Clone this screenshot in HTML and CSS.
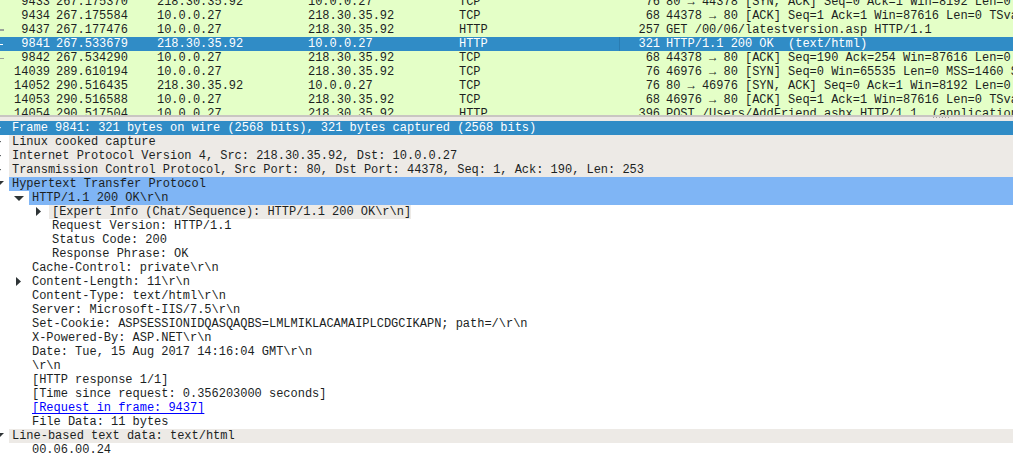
FILE: index.html
```html
<!DOCTYPE html>
<html lang="en">
<head>
<meta charset="utf-8">
<title>Wireshark</title>
<link rel="stylesheet" href="styles.css">
</head>
<body>
<section class="list">
  <div class="pkt"><span class="no">9433</span><span>267.175370</span><span>218.30.35.92</span><span>10.0.0.27</span><span>TCP</span><span class="len">76</span><span class="info">80 → 44378 [SYN, ACK] Seq=0 Ack=1 Win=8192 Len=0 MSS=1460</span></div>
  <div class="pkt"><span class="no">9434</span><span>267.175584</span><span>10.0.0.27</span><span>218.30.35.92</span><span>TCP</span><span class="len">68</span><span class="info">44378 → 80 [ACK] Seq=1 Ack=1 Win=87616 Len=0 TSval=1</span></div>
  <div class="pkt"><i class="mark req"></i><span class="no">9437</span><span>267.177476</span><span>10.0.0.27</span><span>218.30.35.92</span><span>HTTP</span><span class="len">257</span><span class="info">GET /00/06/latestversion.asp HTTP/1.1</span></div>
  <div class="pkt sel"><i class="mark cur"></i><i class="edge"></i><span class="no">9841</span><span>267.533679</span><span>218.30.35.92</span><span>10.0.0.27</span><span>HTTP</span><span class="len">321</span><span class="info">HTTP/1.1 200 OK  (text/html)</span></div>
  <div class="pkt"><i class="mark ack"></i><span class="no">9842</span><span>267.534290</span><span>10.0.0.27</span><span>218.30.35.92</span><span>TCP</span><span class="len">68</span><span class="info">44378 → 80 [ACK] Seq=190 Ack=254 Win=87616 Len=0 TSval=1</span></div>
  <div class="pkt"><span class="no">14039</span><span>289.610194</span><span>10.0.0.27</span><span>218.30.35.92</span><span>TCP</span><span class="len">76</span><span class="info">46976 → 80 [SYN] Seq=0 Win=65535 Len=0 MSS=1460 SACK_PERM=1</span></div>
  <div class="pkt"><span class="no">14052</span><span>290.516435</span><span>218.30.35.92</span><span>10.0.0.27</span><span>TCP</span><span class="len">76</span><span class="info">80 → 46976 [SYN, ACK] Seq=0 Ack=1 Win=8192 Len=0 MSS=1460</span></div>
  <div class="pkt"><span class="no">14053</span><span>290.516588</span><span>10.0.0.27</span><span>218.30.35.92</span><span>TCP</span><span class="len">68</span><span class="info">46976 → 80 [ACK] Seq=1 Ack=1 Win=87616 Len=0 TSval=1</span></div>
  <div class="pkt"><span class="no">14054</span><span>290.517504</span><span>10.0.0.27</span><span>218.30.35.92</span><span>HTTP</span><span class="len">396</span><span class="info">POST /Users/AddFriend.ashx HTTP/1.1  (application/x-www-form</span></div>
</section>
<div class="split"><div class="grip"></div></div>
<section class="tree">
  <div class="row l0 sel"><svg class="arrow right" viewBox="0 0 5 9"><path d="M0 0L5 4.5L0 9Z"/></svg><span class="txt">Frame 9841: 321 bytes on wire (2568 bits), 321 bytes captured (2568 bits)</span></div>
  <div class="row l0 grey"><svg class="arrow right" viewBox="0 0 5 9"><path d="M0 0L5 4.5L0 9Z"/></svg><span class="txt">Linux cooked capture</span></div>
  <div class="row l0 grey"><svg class="arrow right" viewBox="0 0 5 9"><path d="M0 0L5 4.5L0 9Z"/></svg><span class="txt">Internet Protocol Version 4, Src: 218.30.35.92, Dst: 10.0.0.27</span></div>
  <div class="row l0 grey"><svg class="arrow right" viewBox="0 0 5 9"><path d="M0 0L5 4.5L0 9Z"/></svg><span class="txt">Transmission Control Protocol, Src Port: 80, Dst Port: 44378, Seq: 1, Ack: 190, Len: 253</span></div>
  <div class="row l0 blue"><svg class="arrow down" viewBox="0 0 10 5"><path d="M0 0H10L5 5Z"/></svg><span class="txt">Hypertext Transfer Protocol</span></div>
  <div class="row l1 blue"><svg class="arrow down" viewBox="0 0 10 5"><path d="M0 0H10L5 5Z"/></svg><span class="txt">HTTP/1.1 200 OK\r\n</span></div>
  <div class="row l2"><svg class="arrow right" viewBox="0 0 5 9"><path d="M0 0L5 4.5L0 9Z"/></svg><span class="txt greytxt">[Expert Info (Chat/Sequence): HTTP/1.1 200 OK\r\n]</span></div>
  <div class="row l2"><span class="txt">Request Version: HTTP/1.1</span></div>
  <div class="row l2"><span class="txt">Status Code: 200</span></div>
  <div class="row l2"><span class="txt">Response Phrase: OK</span></div>
  <div class="row l1"><span class="txt">Cache-Control: private\r\n</span></div>
  <div class="row l1"><svg class="arrow right" viewBox="0 0 5 9"><path d="M0 0L5 4.5L0 9Z"/></svg><span class="txt">Content-Length: 11\r\n</span></div>
  <div class="row l1"><span class="txt">Content-Type: text/html\r\n</span></div>
  <div class="row l1"><span class="txt">Server: Microsoft-IIS/7.5\r\n</span></div>
  <div class="row l1"><span class="txt">Set-Cookie: ASPSESSIONIDQASQAQBS=LMLMIKLACAMAIPLCDGCIKAPN; path=/\r\n</span></div>
  <div class="row l1"><span class="txt">X-Powered-By: ASP.NET\r\n</span></div>
  <div class="row l1"><span class="txt">Date: Tue, 15 Aug 2017 14:16:04 GMT\r\n</span></div>
  <div class="row l1"><span class="txt">\r\n</span></div>
  <div class="row l1"><span class="txt">[HTTP response 1/1]</span></div>
  <div class="row l1"><span class="txt">[Time since request: 0.356203000 seconds]</span></div>
  <div class="row l1"><a class="txt link" href="#">[Request in frame: 9437]</a></div>
  <div class="row l1"><span class="txt">File Data: 11 bytes</span></div>
  <div class="row l0 grey"><svg class="arrow down" viewBox="0 0 10 5"><path d="M0 0H10L5 5Z"/></svg><span class="txt">Line-based text data: text/html</span></div>
  <div class="row l1"><span class="txt">00.06.00.24</span></div>
</section>
</body>
</html>
```
FILE: styles.css
```css
* { box-sizing: border-box; }
html, body { margin: 0; height: 100%; overflow: hidden; background: #fff; }
body { font: 12px/14px "Liberation Mono", monospace; letter-spacing: -0.02px; color: #1c1f1f; }
.list { height: 115px; overflow: hidden; background: #e4ffc7; }
.pkt { display: grid; grid-template-columns: 50px 101px 151px 151px 145px 62px 1fr; height: 14px; white-space: pre; position: relative; }
.pkt:first-child { margin-top: -5px; }
.pkt > span { padding-left: 6px; overflow: hidden; }
.pkt .no, .pkt .len { text-align: right; padding-left: 0; }
.pkt.sel { background: #308cc6; color: #fff; }
.mark { position: absolute; left: 0; top: 7px; height: 1px; width: 4px; background: #9aa39a; }
.mark.cur { background: #fff; width: 3px; }
.mark.req { top: 6px; height: 2px; }
.edge { position: absolute; left: 619px; top: 0; width: 1px; height: 14px; background: #2a7cb2; }
.split { height: 6px; background: #edeae6; border-top: 2px solid #c9c6c2; }
.grip { margin-left: 933px; width: 16px; height: 1px; background: repeating-linear-gradient(90deg, #a8a5a1 0 1px, transparent 1px 3px); }
.tree { background: #fff; }
.row { height: 14px; white-space: pre; position: relative; }
.row.l0 { padding-left: 9px; }
.row.l1 { padding-left: 29px; }
.row.l2 { padding-left: 49px; }
.txt { padding-left: 3px; display: inline-block; height: 14px; }
.row.sel .txt, .row.grey .txt, .row.blue .txt { display: block; }
.row.sel { background: #308cc6; color: #fff; }
.row.grey .txt { background: #edeae6; }
.row.blue .txt { background: #7fb5f5; }
.greytxt { background: #edeae6; }
.link { color: #0000ff; text-decoration: underline; text-underline-offset: 2px; }
.arrow { position: absolute; fill: #2e3436; }
.arrow.right { top: 2px; width: 5px; height: 9px; }
.arrow.down { top: 5px; width: 10px; height: 5px; }
.l0 .arrow.right { left: -4px; }
.l0 .arrow.down { left: -6px; top: 4px; }
.l0.sel .arrow { fill: #fff; }
.l1 .arrow.right { left: 16px; }
.l1 .arrow.down { left: 14px; }
.l2 .arrow.right { left: 36px; }
```
